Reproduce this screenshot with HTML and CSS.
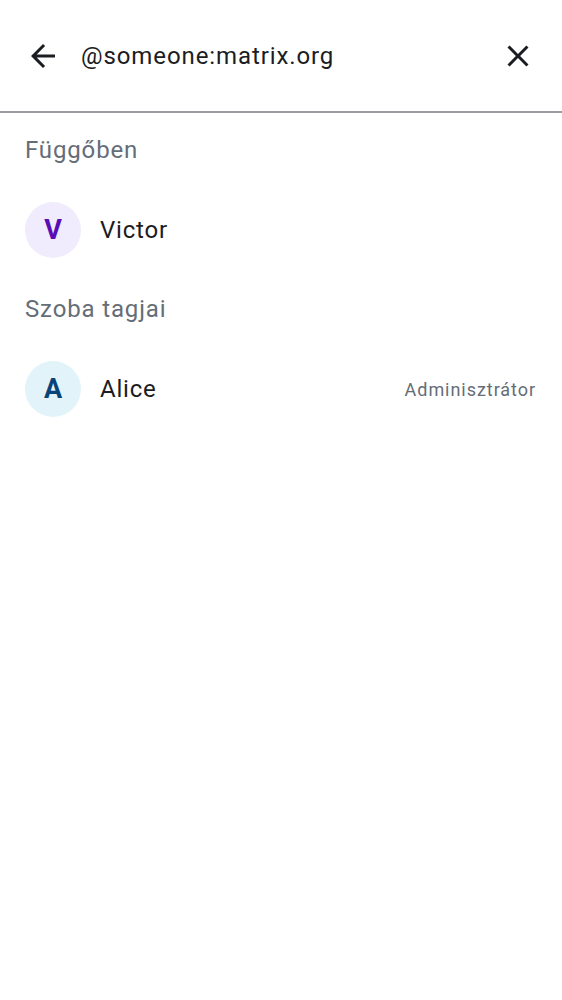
FILE: index.html
```html
<!DOCTYPE html>
<html lang="hu">
<head>
<meta charset="utf-8">
<link rel="stylesheet" href="styles.css">
</head>
<body>
<div class="screen">
  <header class="search-bar">
    <button class="icon-btn back" aria-label="Vissza">
      <svg viewBox="0 0 24 24" width="36" height="36"><path d="M20 11H7.83l5.59-5.59L12 4l-8 8 8 8 1.41-1.41L7.83 13H20v-2z" fill="#1b1d22"/></svg>
    </button>
    <div class="query">@someone:matrix.org</div>
    <button class="icon-btn close" aria-label="Törlés">
      <svg viewBox="0 0 24 24" width="36" height="36"><path d="M19 6.41 17.59 5 12 10.59 6.41 5 5 6.41 10.59 12 5 17.59 6.41 19 12 13.41 17.59 19 19 17.59 13.41 12z" fill="#1b1d22"/></svg>
    </button>
  </header>
  <div class="divider"></div>
  <section>
    <div class="section-title">Függőben</div>
    <div class="member">
      <div class="avatar avatar-purple">V</div>
      <div class="name">Victor</div>
    </div>
  </section>
  <section>
    <div class="section-title">Szoba tagjai</div>
    <div class="member">
      <div class="avatar avatar-blue">A</div>
      <div class="name">Alice</div>
      <div class="role">Adminisztrátor</div>
    </div>
  </section>
</div>
</body>
</html>
```
FILE: styles.css
```css
html, body {
  margin: 0;
  padding: 0;
  background: #ffffff;
}
body {
  font-family: Roboto, "Noto Sans", "Liberation Sans", sans-serif;
  color: #1b1d22;
}
.screen {
  width: 562px;
  min-height: 1000px;
  background: #ffffff;
}
.search-bar {
  height: 111px;
  display: flex;
  align-items: center;
  padding: 0 26px 0 25px;
  box-sizing: border-box;
}
.icon-btn {
  width: 36px;
  height: 36px;
  padding: 0;
  border: 0;
  background: none;
  display: flex;
  align-items: center;
  justify-content: center;
}
.icon-btn svg {
  display: block;
}
.query {
  flex: 1;
  margin-left: 20px;
  font-size: 24px;
  line-height: 28px;
  color: #1b1d22;
  letter-spacing: 0.9px;
}
.divider {
  height: 2px;
  background: #8e9297;
  opacity: 0.9;
}
.section-title {
  height: 75px;
  display: flex;
  align-items: center;
  padding-left: 25px;
  padding-bottom: 1px;
  box-sizing: border-box;
  font-size: 24px;
  color: #656d77;
  letter-spacing: 0.85px;
}
.member {
  height: 84px;
  display: flex;
  align-items: center;
  padding: 0 26px 0 25px;
}
.avatar {
  width: 56px;
  height: 56px;
  border-radius: 50%;
  display: flex;
  align-items: center;
  justify-content: center;
  font-size: 27px;
  font-weight: 700;
  flex-shrink: 0;
}
.avatar-purple {
  background: #f0ecfd;
  color: #5a0db5;
}
.avatar-blue {
  background: #e2f4f9;
  color: #0a4378;
}
.name {
  flex: 1;
  margin-left: 19px;
  font-size: 24px;
  letter-spacing: 0.8px;
  color: #1b1d22;
}
.role {
  font-size: 18px;
  letter-spacing: 0.95px;
  color: #656d77;
}
```
